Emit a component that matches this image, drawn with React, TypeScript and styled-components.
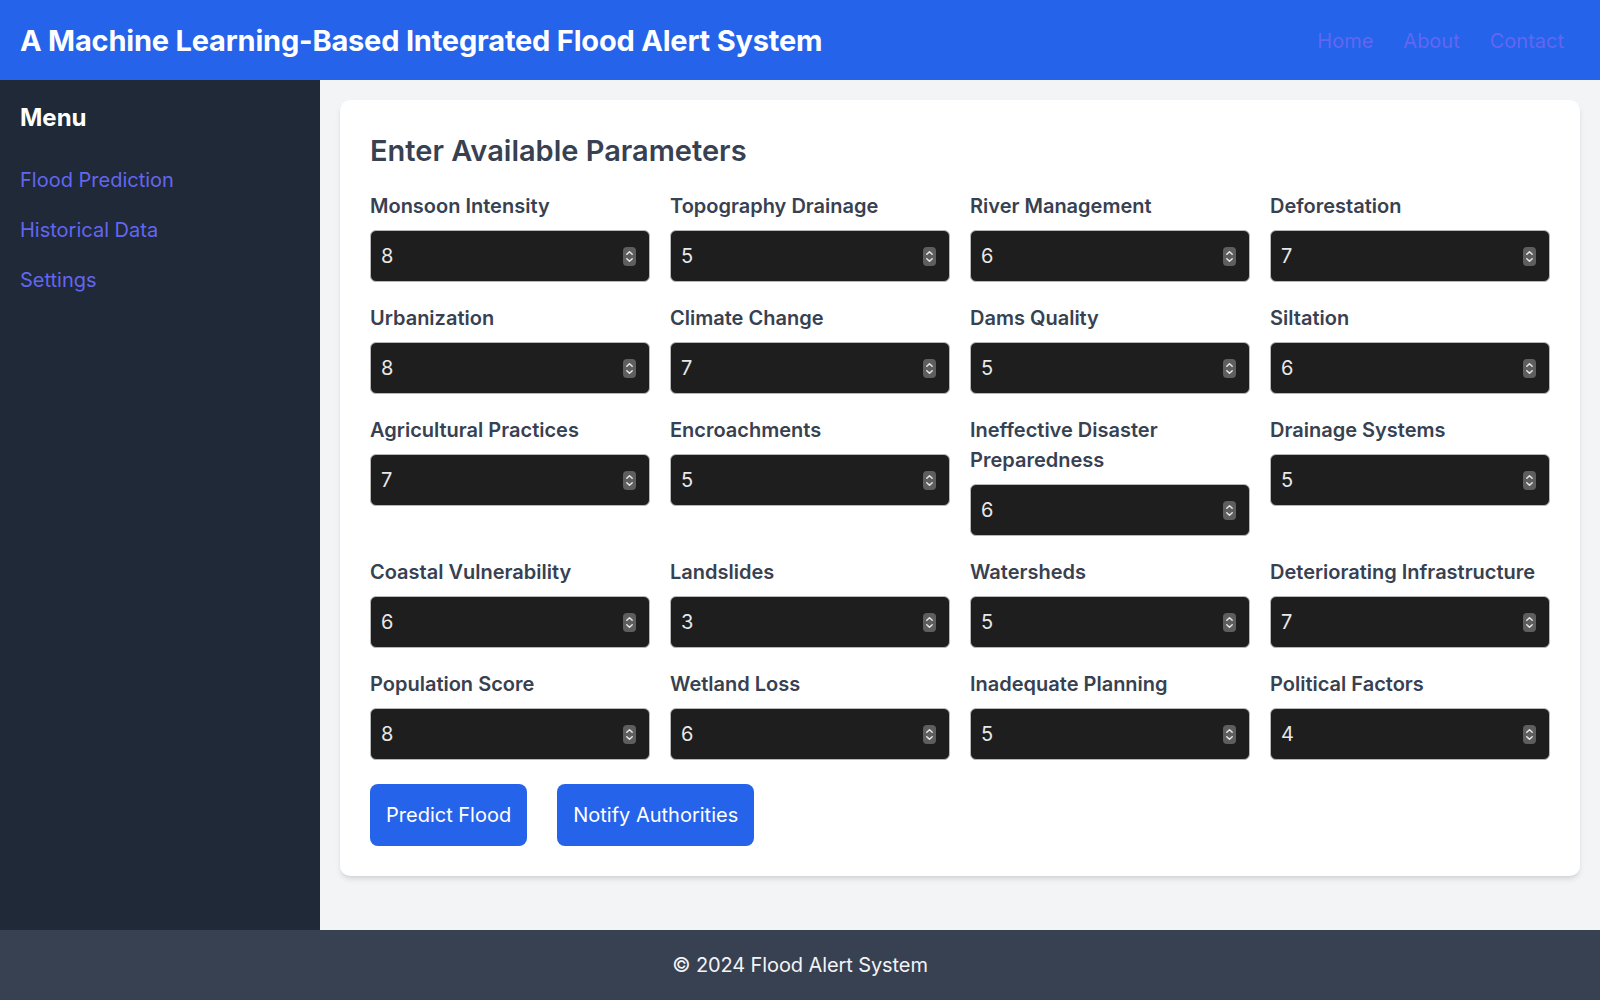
import React from 'react'
import styled, { createGlobalStyle } from 'styled-components'

const GlobalStyle = createGlobalStyle`
    * {
        box-sizing: border-box;
    }

    body {
        margin: 0;
        font-family: Inter, 'Noto Sans', 'Liberation Sans', sans-serif;
        background: #f3f4f6;
    }
`

const Page = styled.div`
    display: flex;
    flex-direction: column;
    min-height: 100vh;
`

const Header = styled.header`
    display: flex;
    align-items: center;
    justify-content: space-between;
    height: 80px;
    padding: 0 36px 0 20px;
    background: #2563eb;
`

const Title = styled.h1`
    margin: 0;
    font-size: 29px;
    font-weight: 700;
    color: #fff;
    letter-spacing: -0.2px;
`

const Nav = styled.nav`
    display: flex;
    gap: 30px;
    padding-top: 2px;
`

const NavLink = styled.a`
    font-size: 20px;
    color: #6366f1;
    text-decoration: none;
`

const Body = styled.div`
    display: flex;
    flex: 1;
`

const Sidebar = styled.aside`
    width: 320px;
    flex-shrink: 0;
    padding: 22px 20px 20px;
    background: #1f2937;
`

const MenuTitle = styled.h2`
    margin: 0 0 31px;
    font-size: 24px;
    line-height: 32px;
    font-weight: 700;
    color: #fff;
`

const MenuList = styled.ul`
    display: flex;
    flex-direction: column;
    gap: 20px;
    margin: 0;
    padding: 0;
    list-style: none;
`

const MenuLink = styled.a`
    display: block;
    font-size: 20px;
    line-height: 30px;
    color: #6366f1;
    text-decoration: none;
`

const Main = styled.main`
    flex: 1;
    min-width: 0;
    padding: 20px;
`

const Card = styled.section`
    padding: 33px 30px 30px;
    background: #fff;
    border-radius: 10px;
    box-shadow: 0 4px 6px -1px rgba(0, 0, 0, 0.1), 0 2px 4px -2px rgba(0, 0, 0, 0.1);
`

const Heading = styled.h2`
    margin: 0 0 22px;
    font-size: 29px;
    line-height: 36px;
    font-weight: 600;
    color: #374151;
`

const Grid = styled.div`
    display: grid;
    grid-template-columns: repeat(4, minmax(0, 1fr));
    column-gap: 20px;
    row-gap: 21px;
    align-items: start;
`

const Field = styled.label`
    display: flex;
    flex-direction: column;
    min-width: 0;
`

const LabelText = styled.span`
    margin-bottom: 9px;
    font-size: 20px;
    line-height: 30px;
    font-weight: 600;
    color: #374151;
`

const InputBox = styled.div`
    display: flex;
    align-items: center;
    height: 52px;
    padding: 0 13px 0 10px;
    background: #1e1e1e;
    border: 1px solid #b8b8b8;
    border-radius: 6px;
`

const NumberInput = styled.input`
    flex: 1;
    width: 0;
    min-width: 0;
    padding: 0;
    border: none;
    outline: none;
    background: transparent;
    font-family: inherit;
    font-size: 20px;
    color: #e8e8e8;
    appearance: textfield;
    -moz-appearance: textfield;

    &::-webkit-inner-spin-button,
    &::-webkit-outer-spin-button {
        -webkit-appearance: none;
        margin: 0;
    }
`

const Actions = styled.div`
    display: flex;
    gap: 30px;
    margin-top: 24px;
`

const Button = styled.button`
    padding: 16px;
    border: none;
    border-radius: 8px;
    background: #2563eb;
    font-family: inherit;
    font-size: 20px;
    line-height: 30px;
    color: #fff;
    cursor: pointer;
`

const Footer = styled.footer`
    display: flex;
    align-items: center;
    justify-content: center;
    height: 70px;
    background: #374151;
    font-size: 20px;
    letter-spacing: -0.1px;
    color: #f3f4f6;
`

const Spinner = () => (
    <svg width="13" height="19" viewBox="0 0 13 19" aria-hidden>
        <rect x="0" y="0" width="13" height="19" rx="4" fill="#5e5e5e" />
        <path d="M3.8 7.3 L6.5 4.8 L9.2 7.3" fill="none" stroke="#e6e6e6" strokeWidth="1.5" strokeLinecap="round" strokeLinejoin="round" />
        <path d="M3.8 11.7 L6.5 14.2 L9.2 11.7" fill="none" stroke="#e6e6e6" strokeWidth="1.5" strokeLinecap="round" strokeLinejoin="round" />
    </svg>
)

const params: [string, number][] = [
    ['Monsoon Intensity', 8],
    ['Topography Drainage', 5],
    ['River Management', 6],
    ['Deforestation', 7],
    ['Urbanization', 8],
    ['Climate Change', 7],
    ['Dams Quality', 5],
    ['Siltation', 6],
    ['Agricultural Practices', 7],
    ['Encroachments', 5],
    ['Ineffective Disaster Preparedness', 6],
    ['Drainage Systems', 5],
    ['Coastal Vulnerability', 6],
    ['Landslides', 3],
    ['Watersheds', 5],
    ['Deteriorating Infrastructure', 7],
    ['Population Score', 8],
    ['Wetland Loss', 6],
    ['Inadequate Planning', 5],
    ['Political Factors', 4],
]

const App: React.FunctionComponent = () => (
    <>
        <GlobalStyle />
        <Page>
            <Header>
                <Title>A Machine Learning-Based Integrated Flood Alert System</Title>
                <Nav>
                    <NavLink href="#">Home</NavLink>
                    <NavLink href="#">About</NavLink>
                    <NavLink href="#">Contact</NavLink>
                </Nav>
            </Header>
            <Body>
                <Sidebar>
                    <MenuTitle>Menu</MenuTitle>
                    <MenuList>
                        <li>
                            <MenuLink href="#">Flood Prediction</MenuLink>
                        </li>
                        <li>
                            <MenuLink href="#">Historical Data</MenuLink>
                        </li>
                        <li>
                            <MenuLink href="#">Settings</MenuLink>
                        </li>
                    </MenuList>
                </Sidebar>
                <Main>
                    <Card>
                        <Heading>Enter Available Parameters</Heading>
                        <Grid>
                            {params.map(([name, value]) => (
                                <Field key={name}>
                                    <LabelText>{name}</LabelText>
                                    <InputBox>
                                        <NumberInput type="number" defaultValue={value} />
                                        <Spinner />
                                    </InputBox>
                                </Field>
                            ))}
                        </Grid>
                        <Actions>
                            <Button>Predict Flood</Button>
                            <Button>Notify Authorities</Button>
                        </Actions>
                    </Card>
                </Main>
            </Body>
            <Footer>© 2024 Flood Alert System</Footer>
        </Page>
    </>
)

export default App
